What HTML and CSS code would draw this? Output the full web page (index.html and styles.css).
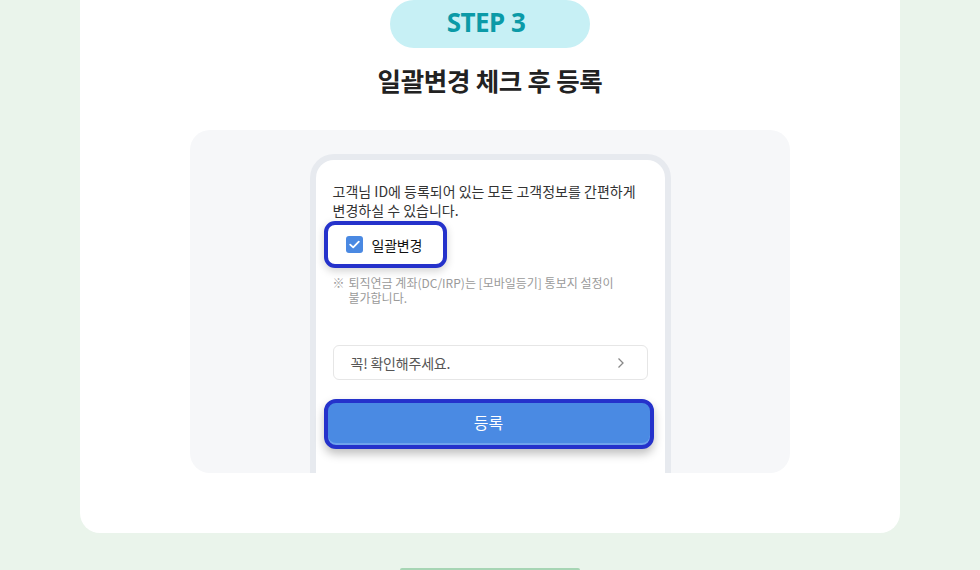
FILE: index.html
```html
<!DOCTYPE html>
<html>
<head>
  <meta charset="UTF-8">
  <title>STEP 3 - 일괄변경 체크 후 등록</title>
  <link rel="stylesheet" href="styles.css">
</head>
<body>
  <div class="card">
    <div class="step-badge">STEP 3</div>
    <h2 class="step-title">일괄변경 체크 후 등록</h2>

    <div class="preview">
      <div class="phone">
        <p class="desc">고객님 ID에 등록되어 있는 모든 고객정보를 간편하게<br>변경하실 수 있습니다.</p>

        <!-- 강조 표시된 체크박스 -->
        <div class="highlight check-row">
          <span class="checkbox">
            <svg width="11" height="9" viewBox="0 0 11 9"><path d="M1.2 4.6 L4.2 7.4 L9.8 1.6" fill="none" stroke="#fff" stroke-width="1.8" stroke-linecap="round" stroke-linejoin="round"/></svg>
          </span>
          <span class="check-label">일괄변경</span>
        </div>

        <div class="note">
          <span class="note-mark">※</span>
          <div class="note-text">
            <div>퇴직연금 계좌(DC/IRP)는 [모바일등기] 통보지 설정이</div>
            <div>불가합니다.</div>
          </div>
        </div>

        <div class="confirm-row">
          <span>꼭! 확인해주세요.</span>
          <svg width="8" height="12" viewBox="0 0 8 12"><path d="M1.5 1.5 L6 6 L1.5 10.5" fill="none" stroke="#888" stroke-width="1.3"/></svg>
        </div>

        <button class="submit-btn">등록</button>
      </div>
    </div>
  </div>

  <div class="next-btn"></div>
</body>
</html>
```

FILE: styles.css
```css
html, body {
  margin: 0;
  padding: 0;
  height: 570px;
  overflow: hidden;
  background-color: #eaf4eb;
  font-family: "Noto Sans CJK KR", "Noto Sans", sans-serif;
  color: #222;
}

/* 흰색 카드 */
.card {
  width: 820px;
  margin: 0 auto;
  height: 533px;
  box-sizing: border-box;
  background-color: #fff;
  border-radius: 0 0 20px 20px;
  display: flex;
  flex-direction: column;
  align-items: center;
}

.step-badge {
  width: 200px;
  height: 48px;
  box-sizing: border-box;
  padding-right: 8px;
  border-radius: 24px;
  background-color: #c7f0f5;
  color: #0b9aa7;
  font-family: "Noto Sans", sans-serif;
  font-weight: 700;
  font-size: 26px;
  line-height: 45px;
  text-align: center;
  letter-spacing: -0.5px;
}

.step-title {
  margin: 15px 0 33px;
  font-size: 25.5px;
  line-height: 34px;
  font-weight: 700;
  color: #222;
  letter-spacing: -0.3px;
}

/* 회색 미리보기 영역 */
.preview {
  width: 600px;
  height: 343px;
  background-color: #f6f7f9;
  border-radius: 20px;
  overflow: hidden;
  display: flex;
  justify-content: center;
  padding-top: 24px;
  box-sizing: border-box;
}

.phone {
  width: 361px;
  box-sizing: border-box;
  border: 6px solid #e7eaef;
  border-bottom: none;
  border-radius: 24px 24px 0 0;
  background-color: #fff;
  padding: 22px 17px 0;
}

.desc {
  margin: 0;
  font-size: 14px;
  line-height: 19px;
  color: #333;
}

.highlight {
  border: 4px solid #2532cb;
  border-radius: 11px;
  box-shadow: 0 3px 8px rgba(0, 0, 0, 0.18);
  background-color: #fff;
}

.check-row {
  display: inline-flex;
  align-items: center;
  margin: 1px 0 0 -9px;
  height: 47px;
  box-sizing: border-box;
  padding: 0 21px 0 18px;
}

.checkbox {
  width: 17px;
  height: 17px;
  border-radius: 3px;
  background-color: #4a89e2;
  display: flex;
  align-items: center;
  justify-content: center;
  margin-right: 9px;
}

.check-label {
  font-size: 14px;
  color: #111;
  letter-spacing: -0.2px;
}

.note {
  display: flex;
  margin-top: 7px;
  font-size: 12px;
  color: #9a9a9a;
}

.note-text div {
  height: 15px;
  line-height: 15px;
}

.note-mark {
  width: 16px;
  line-height: 15px;
  flex-shrink: 0;
}

.confirm-row {
  display: flex;
  justify-content: space-between;
  align-items: center;
  margin-top: 40px;
  height: 35px;
  box-sizing: border-box;
  border: 1px solid #e6e6e6;
  border-radius: 6px;
  padding: 0 22px 0 17px;
  font-size: 14px;
  color: #555;
  letter-spacing: -0.2px;
}

.submit-btn {
  display: block;
  width: 330px;
  height: 50px;
  margin: 19px 0 0 -9px;
  padding: 0 0 4px;
  border: 4px solid #2532cb;
  border-radius: 12px;
  background-color: #4a8ae3;
  box-shadow: inset 0 -2px 0 #6fa3ec, 0 5px 10px rgba(0, 0, 0, 0.25);
  color: #fff;
  font-family: inherit;
  font-size: 16px;
  cursor: pointer;
}

.next-btn {
  width: 180px;
  height: 2px;
  margin: 35px auto 0;
  border-radius: 2px 2px 0 0;
  background-color: #a7d5b4;
}
```
